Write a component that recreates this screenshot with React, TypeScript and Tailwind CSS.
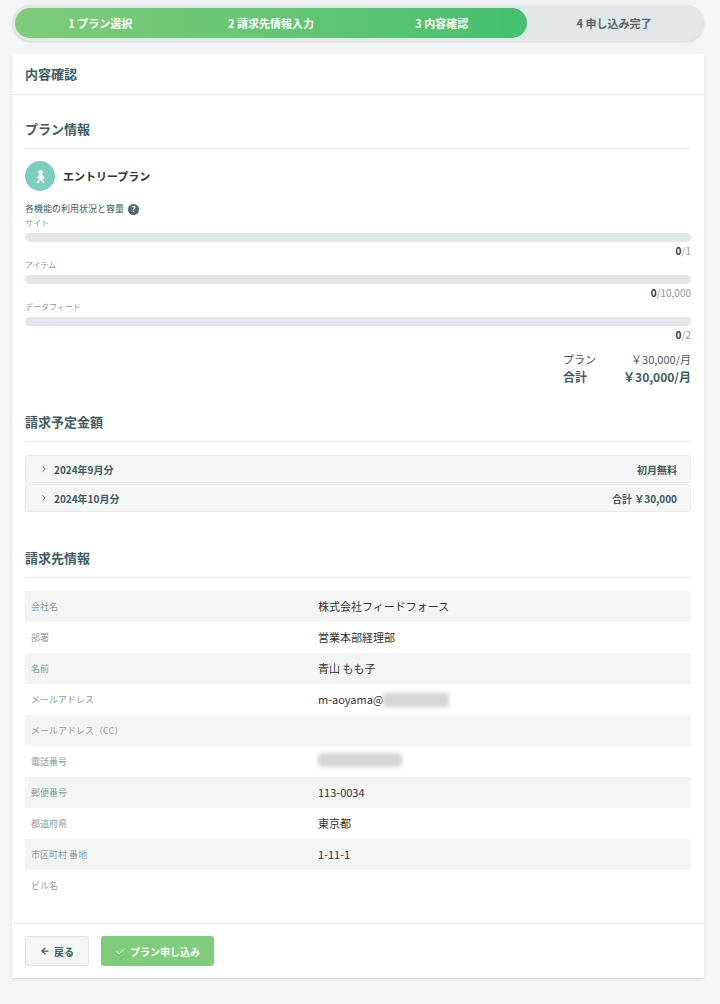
import { ChevronRight, Check, ArrowLeft } from 'lucide-react';

const rows: [string, React.ReactNode][] = [
  ['会社名', '株式会社フィードフォース'],
  ['部署', '営業本部経理部'],
  ['名前', '青山 もも子'],
  ['メールアドレス', <span className="flex items-center">m-aoyama@<span className="inline-block w-[66px] h-[14px] bg-[#d4d6d8] blur-[2px]" /></span>],
  ['メールアドレス（CC）', ''],
  ['電話番号', <span className="inline-block w-[84px] h-[14px] bg-[#d4d6d8] blur-[2px]" />],
  ['郵便番号', '113-0034'],
  ['都道府県', '東京都'],
  ['市区町村 番地', '1-11-1'],
  ['ビル名', ''],
];

const usage = [
  ['サイト', '1'],
  ['アイテム', '10,000'],
  ['データフィード', '2'],
];

function SectionTitle({ children }: { children: React.ReactNode }) {
  return (
    <div className="h-[40px] flex items-center border-b border-[#e6ecec] text-[13px] font-bold text-[#3f5a60]">
      {children}
    </div>
  );
}

export default function App() {
  return (
    <div className="min-h-[1004px] bg-[#f3f5f6] pl-[12px] pr-[16px] pt-[5px] pb-[12px]" style={{ fontFamily: '"Noto Sans CJK JP", "Noto Sans", sans-serif' }}>
      {/* Stepper */}
      <div className="h-[36px] rounded-full bg-[#e2e7e9] p-[3px] flex text-[11px] font-bold shadow-sm">
        <div className="w-[512px] flex rounded-full bg-gradient-to-r from-[#7fcc7a] to-[#43c06f] text-white">
          <div className="flex-1 flex items-center justify-center">1 プラン選択</div>
          <div className="flex-1 flex items-center justify-center">2 請求先情報入力</div>
          <div className="flex-1 flex items-center justify-center">3 内容確認</div>
        </div>
        <div className="flex-1 flex items-center justify-center text-[#56686d]">4 申し込み完了</div>
      </div>

      <div className="mt-[13px] bg-white shadow-sm">
        <div className="h-[41px] flex items-center px-[13px] border-b border-[#e6ecec] text-[13px] font-bold text-[#3f5a60]">内容確認</div>

        <div className="px-[13px] pt-[14px] pb-[22px]">
          <SectionTitle>プラン情報</SectionTitle>
          <div className="flex items-center gap-[8px] mt-[12px]">
            <div className="w-[30px] h-[30px] rounded-full bg-[#7ccfbc] flex items-center justify-center text-white text-[13px]">🚶︎</div>
            <span className="text-[11px] font-bold text-[#333]">エントリープラン</span>
          </div>
          <div className="mt-[12px] flex items-center gap-[4px] text-[9px] leading-[12px] text-[#3f5a60]">
            各機能の利用状況と容量
            <span className="w-[11px] h-[11px] rounded-full bg-[#4e6a72] text-white text-[8px] font-bold flex items-center justify-center">?</span>
          </div>
          {usage.map(([l, m]) => (
            <div key={l} className="mt-[2px]">
              <div className="text-[8px] leading-[12px] text-[#8a9ea3]">{l}</div>
              <div className="mt-[4px] h-[9px] rounded-full bg-[#e2e7e9]" />
              <div className="text-right text-[10px] leading-[12px] mt-[3px] text-[#333]"><b>0</b><span className="text-[#999]">/{m}</span></div>
            </div>
          ))}
          <div className="mt-[10px] flex flex-col items-end text-[#3f5a60]">
            <div className="flex text-[11px] leading-[16px]"><span className="w-[60px]">プラン</span><span className="w-[68px] text-right text-[#555]">￥30,000/月</span></div>
            <div className="flex text-[12px] leading-[18px] font-bold mt-[1px]"><span className="w-[60px]">合計</span><span className="w-[68px] text-right whitespace-nowrap">￥30,000/月</span></div>
          </div>

          <div className="mt-[16px]"><SectionTitle>請求予定金額</SectionTitle></div>
          <div className="mt-[13px] flex flex-col gap-[1px]">
            {[['2024年9月分', '初月無料'], ['2024年10月分', '合計 ￥30,000']].map(([a, b]) => (
              <div key={a} className="h-[28px] flex items-center justify-between bg-[#f3f5f6] border border-[#e6ebec] rounded-[3px] px-[13px] text-[10px] font-bold text-[#3f5a60]">
                <span className="flex items-center gap-[5px]"><ChevronRight size={10} />{a}</span>
                <span>{b}</span>
              </div>
            ))}
          </div>

          <div className="mt-[26px]"><SectionTitle>請求先情報</SectionTitle></div>
          <div className="mt-[13px]">
            {rows.map(([l, v], i) => (
              <div key={l} className={`h-[31px] flex items-center ${i % 2 === 0 ? 'bg-[#f3f5f5]' : ''}`}>
                <div className="w-[293px] pl-[6px] text-[9px] text-[#8a9ea3]">{l}</div>
                <div className="text-[11px] text-[#333]">{v}</div>
              </div>
            ))}
          </div>
        </div>

        <div className="border-t border-[#e6ecec] px-[13px] py-[12px] flex gap-[12px]">
          <button className="h-[30px] px-[14px] flex items-center gap-[4px] bg-[#f3f5f6] border border-[#dde3e5] rounded-[3px] text-[10px] font-bold text-[#3f5a60]">
            <ArrowLeft size={10} strokeWidth={3} />戻る
          </button>
          <button className="h-[30px] px-[14px] flex items-center gap-[4px] bg-[#7fcc7a] rounded-[3px] text-[10px] font-bold text-white">
            <Check size={11} />プラン申し込み
          </button>
        </div>
      </div>
    </div>
  );
}
